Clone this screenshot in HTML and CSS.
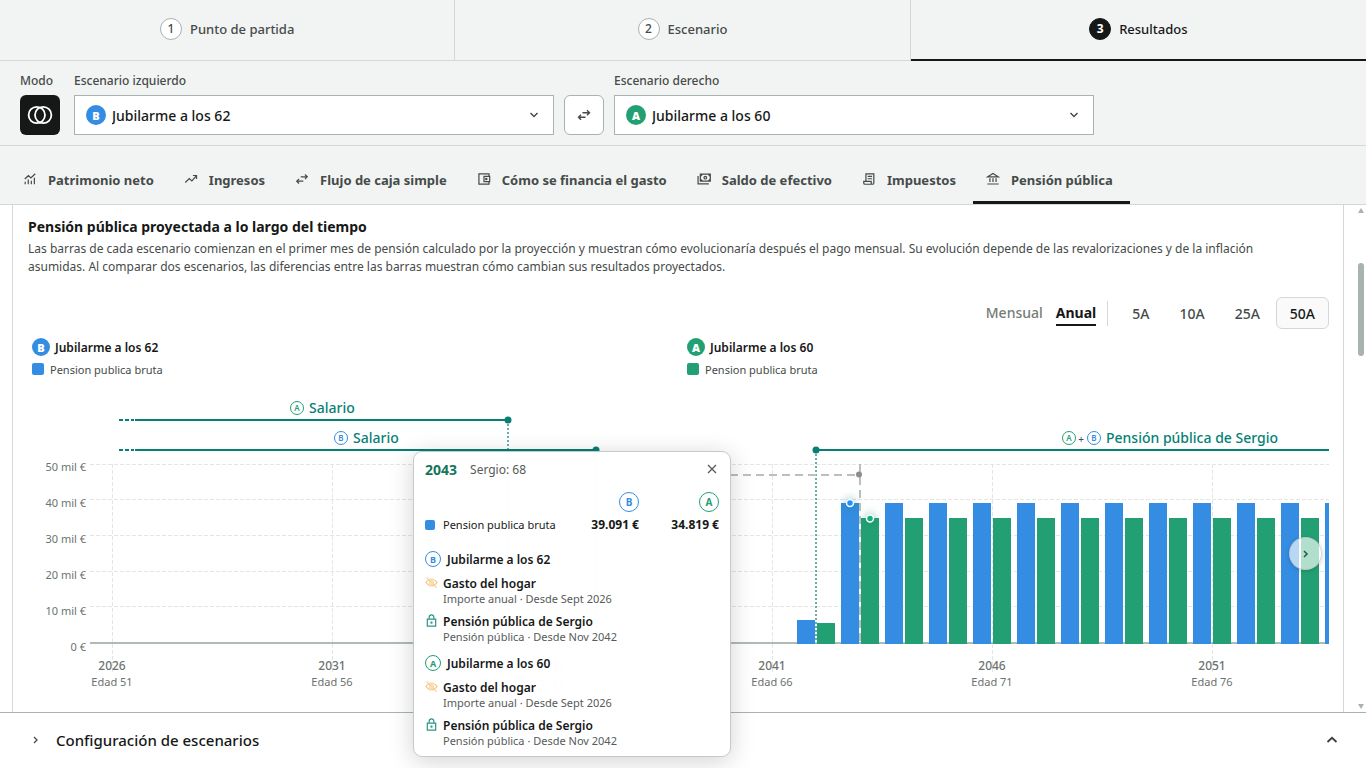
FILE: index.html
```html
<!DOCTYPE html>
<html lang="es">
<head>
<meta charset="utf-8">
<title>Resultados - Pensión pública</title>
<link rel="stylesheet" href="styles.css">
</head>
<body>
<nav class="steps" aria-label="Pasos">
  <button class="step"><span class="step-num">1</span>Punto de partida</button>
  <button class="step"><span class="step-num">2</span>Escenario</button>
  <button class="step step-active"><span class="step-num">3</span>Resultados</button>
</nav>

<section class="controls">
  <div class="field">
    <span class="label">Modo</span>
    <button class="mode" aria-label="Modo comparación"><svg width="26" height="20" viewBox="0 0 26 20" fill="none" stroke="#fff" stroke-width="1.8"><circle cx="9.800" cy="10" r="8.200"/><circle cx="16.200" cy="10" r="8.200"/></svg></button>
  </div>
  <div class="field field-wide">
    <label class="label" for="left">Escenario izquierdo</label>
    <div class="select-wrap">
      <select id="left"><option>Jubilarme a los 62</option></select>
      <span class="badge badge-b badge-over">B</span>
      <svg class="chevron" width="10" height="6" viewBox="0 0 10 6" fill="none" stroke="#454b49" stroke-width="1.5"><path d="M1.500 1 5 4.500 8.500 1"/></svg>
    </div>
  </div>
  <button class="swap" aria-label="Intercambiar"><svg width="14" height="12" viewBox="0 0 14 12" fill="none" stroke="#454b49" stroke-width="1.400"><path d="M5.500 3.800H12.500M10 1.300 12.500 3.800 10 6.300M8.500 8.200H1.500M4 5.700 1.500 8.200 4 10.700"/></svg></button>
  <div class="field field-wide">
    <label class="label" for="right">Escenario derecho</label>
    <div class="select-wrap">
      <select id="right"><option>Jubilarme a los 60</option></select>
      <span class="badge badge-a badge-over">A</span>
      <svg class="chevron" width="10" height="6" viewBox="0 0 10 6" fill="none" stroke="#454b49" stroke-width="1.5"><path d="M1.500 1 5 4.500 8.500 1"/></svg>
    </div>
  </div>
</section>

<nav class="tabs" aria-label="Gráficos">
  <button class="tab"><svg viewBox="0 0 16 16"><path d="M2.500 14V11M6 14V8.500M9.500 14V10M13 14V6.500M2 8 6.200 4.200 9 6.800 14 2"/></svg>Patrimonio neto</button>
  <button class="tab"><svg viewBox="0 0 16 16"><path d="M1.500 12 6 7.500 9 10.200 14 4.500M10.200 4H14.300V8"/></svg>Ingresos</button>
  <button class="tab"><svg viewBox="0 0 16 16"><path d="M6.500 5.500H14M11.400 2.900 14 5.500 11.400 8.100M9.500 10.500H2M4.600 7.900 2 10.500 4.600 13.100"/></svg>Flujo de caja simple</button>
  <button class="tab"><svg viewBox="0 0 16 16"><path d="M13.700 4.500V2.200H2.200V13.800H13.700V11.500M8 5H14.500V11H8Z"/><circle cx="10.600" cy="8" r=".7"/></svg>Cómo se financia el gasto</button>
  <button class="tab"><svg viewBox="0 0 16 16"><path d="M3.800 2.500H15.200V10.500H3.800ZM1.200 4.500V13.500H13.500M4 5 6 2.800M13 2.800 15 5M4 8.200 6 10.200M13 10.200 15 8.200"/><circle cx="9.500" cy="6.500" r="1.500"/></svg>Saldo de efectivo</button>
  <button class="tab"><svg viewBox="0 0 16 16"><path d="M4.500 10.500V2.200H13.500V12.500Q13.500 14 12 14H3.500Q2 14 2 12.500V10.800H10.500V12.500Q10.500 14 12 14M6.500 5H11.500M6.500 7.700H11.500"/></svg>Impuestos</button>
  <button class="tab tab-active"><svg viewBox="0 0 16 16"><path d="M2 5.500 8 1.800 14 5.500ZM4.500 7V11.500M8 7V11.500M11.500 7V11.500M1.500 13.700H14.500"/></svg>Pensión pública</button>
</nav>

<main class="content">
  <article class="card">
    <h2>Pensión pública proyectada a lo largo del tiempo</h2>
    <p class="intro">Las barras de cada escenario comienzan en el primer mes de pensión calculado por la proyección y muestran cómo evolucionaría después el pago mensual. Su evolución depende de las revalorizaciones y de la inflación asumidas. Al comparar dos escenarios, las diferencias entre las barras muestran cómo cambian sus resultados proyectados.</p>
    <div class="range">
      <button class="period">Mensual</button>
      <button class="period period-on">Anual</button>
      <span class="divider"></span>
      <button class="years">5A</button>
      <button class="years">10A</button>
      <button class="years">25A</button>
      <button class="years years-on">50A</button>
    </div>
    <div class="legend">
      <div class="legend-col">
        <div class="legend-name"><span class="badge badge-b badge-small">B</span>Jubilarme a los 62</div>
        <div class="legend-item"><span class="swatch swatch-b"></span>Pension publica bruta</div>
      </div>
      <div class="legend-col">
        <div class="legend-name"><span class="badge badge-a badge-small">A</span>Jubilarme a los 60</div>
        <div class="legend-item"><span class="swatch swatch-a"></span>Pension publica bruta</div>
      </div>
    </div>
    <div class="chart-wrap">
      <svg class="chart" id="chart" role="img" aria-label="Pensión pública por año"></svg>
      <button class="next" aria-label="Siguiente"><svg width="8" height="10" viewBox="0 0 8 10" fill="none" stroke="#2c5a4a" stroke-width="1.600"><path d="M2 2 5 5 2 8"/></svg></button>
    </div>
  </article>
  <div class="scroll" aria-hidden="true">
    <span class="arrow-up"></span>
    <span class="thumb"></span>
    <span class="arrow-down"></span>
  </div>
</main>

<footer class="config">
  <button class="config-btn">
    <svg width="8" height="10" viewBox="0 0 8 10" fill="none" stroke="#454b49" stroke-width="1.300"><path d="M2 2 5 5 2 8"/></svg>
    <span>Configuración de escenarios</span>
    <svg class="config-up" width="12" height="8" viewBox="0 0 12 8" fill="none" stroke="#3a3f3d" stroke-width="1.800"><path d="M1.500 6 6 1.800 10.500 6"/></svg>
  </button>
</footer>

<aside class="tip">
  <header class="tip-head"><strong>2043</strong><span>Sergio: 68</span>
    <button class="close" aria-label="Cerrar"><svg width="10" height="10" viewBox="0 0 10 10" stroke="#555b59" stroke-width="1.300"><path d="M1 1 9 9M9 1 1 9"/></svg></button>
  </header>
  <table class="tip-table">
    <tr><td></td><th><span class="ring ring-b ring-big">B</span></th><th><span class="ring ring-a ring-big">A</span></th></tr>
    <tr><td><div class="series"><span class="dot"></span>Pension publica bruta</div></td><td class="num">39.091 €</td><td class="num">34.819 €</td></tr>
  </table>
  <div class="tip-name"><span class="ring ring-b">B</span>Jubilarme a los 62</div>
  <div class="event"><svg class="eye" viewBox="0 0 14 14"><path d="M1 7Q7-.5 13 7 7 14.500 1 7ZM1.500 1.500 12.500 12.500"/><circle cx="7" cy="7" r="2"/></svg><div><b>Gasto del hogar</b><span>Importe anual · Desde Sept 2026</span></div></div>
  <div class="event"><svg class="lock" viewBox="0 0 14 14"><path d="M2.500 5.500H11.500V13H2.500ZM4.500 5.500V3.500A2.500 2.500 0 0 1 9.500 3.500V5.500"/><circle cx="7" cy="9.300" r=".6"/></svg><div><b>Pensión pública de Sergio</b><span>Pensión pública · Desde Nov 2042</span></div></div>
  <div class="tip-name"><span class="ring ring-a">A</span>Jubilarme a los 60</div>
  <div class="event"><svg class="eye" viewBox="0 0 14 14"><path d="M1 7Q7-.5 13 7 7 14.500 1 7ZM1.500 1.500 12.500 12.500"/><circle cx="7" cy="7" r="2"/></svg><div><b>Gasto del hogar</b><span>Importe anual · Desde Sept 2026</span></div></div>
  <div class="event"><svg class="lock" viewBox="0 0 14 14"><path d="M2.500 5.500H11.500V13H2.500ZM4.500 5.500V3.500A2.500 2.500 0 0 1 9.500 3.500V5.500"/><circle cx="7" cy="9.300" r=".6"/></svg><div><b>Pensión pública de Sergio</b><span>Pensión pública · Desde Nov 2042</span></div></div>
</aside>
<script src="chart.js"></script>
</body>
</html>
```
FILE: styles.css
```css
* { box-sizing: border-box; }
body {
  margin: 0;
  height: 100vh;
  display: flex;
  flex-direction: column;
  overflow: hidden;
  font-family: "Noto Sans", sans-serif;
  font-size: 13px;
  color: #161817;
  background: #fff;
}
button { font: inherit; color: inherit; background: none; border: 0; padding: 0; }

.steps { display: grid; grid-template-columns: repeat(3, 1fr); background: #f2f4f3; flex: none; }
.step {
  height: 61px; padding-bottom: 3px; display: flex; align-items: center; justify-content: center; gap: 8px;
  font-weight: 500; color: #454b49;
  border-bottom: 1px solid #d3d8d6; border-right: 1px solid #d3d8d6;
}
.step-num {
  width: 22px; height: 22px; border-radius: 50%; border: 1px solid #a8b3af; background: #fff;
  display: flex; align-items: center; justify-content: center; font-size: 12px;
}
.step-active { color: #161817; border-right: 0; border-bottom: 2px solid #161817; padding-bottom: 2px; }
.step-active .step-num { background: #161817; border-color: #161817; color: #fff; font-weight: 700; }

.controls {
  flex: none; display: flex; align-items: flex-end; gap: 10px; padding: 10px 20px;
  background: #f2f4f3; border-bottom: 1px solid #d3d8d6;
}
.field { display: flex; flex-direction: column; gap: 5px; }
.field:first-child { margin-right: 4px; }
.field-wide { flex: 0 1 480px; }
.label { font-size: 12px; line-height: 19px; font-weight: 500; color: #454b49; white-space: nowrap; }
.mode, .swap {
  width: 40px; height: 40px; border-radius: 6px; flex: none;
  display: flex; align-items: center; justify-content: center;
}
.mode { background: #161817; }
.swap { background: #fff; border: 1px solid #a8b3af; }
.select-wrap { position: relative; }
.select-wrap select {
  appearance: none; width: 100%; height: 40px; padding: 0 36px 0 37px; border: 1px solid #a8b3af; border-radius: 0;
  background: #fff; font: 500 14px "Noto Sans", sans-serif; color: #161817;
}
.badge {
  width: 20px; height: 20px; border-radius: 50%; color: #fff; font-size: 11px; font-weight: 900;
  display: flex; align-items: center; justify-content: center; flex: none;
}
.badge-small { width: 18px; height: 18px; }
.badge-b { background: #348de2; }
.badge-a { background: #23a073; }
.badge-over { position: absolute; left: 12px; top: 10px; }
.chevron { position: absolute; right: 15px; top: 17px; }

.tabs { flex: none; display: flex; padding-left: 10px; background: #f2f4f3; border-bottom: 1px solid #d3d8d6; }
.tab {
  height: 58px; padding: 12px 17px 0 13px; display: flex; align-items: center; gap: 11px;
  font-size: 13px; font-weight: 700; color: #454b49; white-space: nowrap; border-bottom: 3px solid transparent;
}
.tab svg { width: 14px; height: 14px; margin-bottom: 2px; fill: none; stroke: #454b49; stroke-width: 1.400; }
.tab-active { border-bottom-color: #161817; }

.content { flex: 1; min-height: 0; display: flex; overflow: hidden; padding-left: 12px; }
.card { flex: 1; min-width: 0; border: solid #d3d8d6; border-width: 0 1px; padding: 12px 14px 0 15px; }
h2 { margin: 0; font-size: 14px; line-height: 20px; font-weight: 700; }
.intro { margin: 3px 0 0; padding-right: 48px; font-size: 12px; line-height: 18px; color: #454b49; }
.range { margin-top: 20px; display: flex; justify-content: flex-end; align-items: center; height: 34px; font-size: 14px; font-weight: 500; color: #454b49; }
.period { color: #747b78; margin-right: 13px; padding-top: 2px; border-bottom: 2px solid transparent; line-height: 22px; }
.period-on { color: #161817; font-weight: 700; border-color: #161817; margin-right: 11px; }
.divider { width: 1px; height: 25px; background: #d3d8d6; margin-right: 8px; }
.years { height: 32px; padding: 0 13px; margin-left: 2px; border: 1px solid transparent; border-radius: 6px; }
.years-on { color: #161817; border-color: #d3d8d6; background: #f9faf9; }
.legend { display: grid; grid-template-columns: 1fr 1fr; column-gap: 13px; padding: 8px 0 0 4px; }
.legend-name { display: flex; align-items: center; gap: 5px; height: 18px; font-size: 12px; font-weight: 600; }
.legend-item { display: flex; align-items: center; gap: 6px; height: 18px; margin-top: 4px; font-size: 11px; color: #454b49; }
.swatch { width: 12px; height: 12px; border-radius: 2px; }
.swatch-b { background: #348de2; }
.swatch-a { background: #23a073; }

.chart-wrap { position: relative; margin-top: 18px; }
.chart { display: block; width: 100%; height: 316px; }
.chart text { font-family: "Noto Sans", sans-serif; }
.grid { stroke: #e4e6e5; stroke-dasharray: 4 2; }
.axis { stroke: #b0bab6; stroke-width: 2; }
.span { stroke: #067f75; stroke-width: 2; }
.fade { stroke-dasharray: 4 2; }
.drop { stroke: #067f75; stroke-width: 2; stroke-dasharray: 2 2; opacity: .6; }
.cursor { stroke: #bdbfbe; stroke-width: 2; stroke-dasharray: 8 5; }
.tick { font-size: 11px; fill: #6c7370; }
.year { font-size: 12px; fill: #6c7370; font-weight: 500; }
.span-label { font-size: 14px; font-weight: 500; fill: #067f75; }
.mini { font-size: 8px; font-weight: 600; }
.plus { font-size: 10px; fill: #454b49; }
.marker { stroke: #fff; stroke-width: 1.500; filter: drop-shadow(0 0 4px #067f7599); }
.next {
  position: absolute; right: 7px; top: 141px; width: 33px; height: 33px; border-radius: 50%;
  background: #ffffffa6; border: 1px solid #b8c0bd99; box-shadow: 0 1px 4px #0003;
  display: flex; align-items: center; justify-content: center;
}

.scroll { width: 22px; flex: none; display: flex; flex-direction: column; align-items: flex-end; padding: 3px 2px 3px 0; }
.arrow-up, .arrow-down { border: solid transparent; border-width: 0 3px; }
.arrow-up { border-bottom: 5px solid #a8b3af; }
.arrow-down { border-top: 5px solid #a8b3af; margin-top: auto; }
.thumb { width: 6px; height: 93px; margin-top: 50px; border-radius: 3px; background: #a8b3af; }

.config { flex: none; border-top: 1px solid #a8b3af; }
.config-btn { width: 100%; height: 55px; display: flex; align-items: center; padding: 0 28px 2px 32px; font-size: 15px; font-weight: 500; }
.config-btn span { margin-left: 16px; }
.config-up { margin-left: auto; }

.tip {
  position: absolute; left: 413px; top: 451px; width: 318px; padding: 6px 11px 7px;
  background: #fffffffa; border: 1px solid #c3cac7; border-radius: 9px; box-shadow: 0 4px 24px #0000002e;
  font-size: 12px;
}
.tip-head { display: flex; align-items: center; height: 22px; gap: 13px; color: #555b59; }
.tip-head strong { font-size: 14px; color: #14765c; }
.close { margin-left: auto; width: 14px; height: 14px; display: flex; align-items: center; justify-content: center; }
.tip-table { width: 100%; border-collapse: collapse; margin-top: 10px; }
.tip-table td, .tip-table th { padding: 0; height: 23px; line-height: 16px; vertical-align: middle; font-size: 11px; }
.tip-table .num { text-align: right; font-weight: 700; font-size: 12px; width: 80px; }
.series { display: flex; align-items: center; gap: 8px; }
.dot { width: 10px; height: 10px; border-radius: 2px; background: #348de2; }
.ring {
  width: 16px; height: 16px; border-radius: 50%; border: 1px solid; font-size: 9px; font-weight: 700;
  display: flex; align-items: center; justify-content: center; flex: none;
}
.ring-big { width: 20px; height: 20px; margin-left: auto; font-size: 10px; }
.ring-b { color: #348de2; }
.ring-a { color: #23a073; }
.tip-name { display: flex; align-items: center; gap: 6px; height: 18px; margin-top: 14px; font-size: 12px; font-weight: 600; }
.event { display: flex; gap: 5px; margin-top: 7px; }
.tip-name + .event { margin-top: 8px; }
.event + .tip-name { margin-top: 9px; }
.event svg { width: 13px; height: 13px; fill: none; stroke-width: 1.300; flex: none; }
.eye { stroke: #f6d193; }
.lock { stroke: #2b9687; }
.event b, .event span { display: block; line-height: 16px; }
.event b { font-size: 12px; font-weight: 600; line-height: 15px; }
.event span { font-size: 11px; color: #555b59; }
```
FILE: chart.js
```javascript
const svg = document.getElementById('chart');
const NS = 'http://www.w3.org/2000/svg';
const BLUE = '#348de2';
const GREEN = '#23a073';
const BASE = 248;

function add(tag, attrs, text) {
  const el = document.createElementNS(NS, tag);
  for (const key in attrs) el.setAttribute(key, attrs[key]);
  if (text) el.textContent = text;
  svg.appendChild(el);
}
function line(cls, x1, y1, x2, y2) {
  add('line', { class: cls, x1, y1, x2, y2 });
}
const yearX = (year) => 84 + (year - 2026) * 44;

// Horizontal grid and amounts
[[50, 68.5], [40, 103.5], [30, 139.5], [20, 175.5], [10, 210.5]].forEach(([value, y], i) => {
  line('grid', 62, y, '100%', y);
  add('text', { class: 'tick', x: 58, y: 75 + i * 36, 'text-anchor': 'end' }, value + ' mil €');
});
add('text', { class: 'tick', x: 58, y: 255, 'text-anchor': 'end' }, '0 €');

// Five-year marks
for (let year = 2026; year <= 2051; year += 5) line('grid', yearX(year) + 0.5, 68, yearX(year) + 0.5, 278);
line('axis', 62, 247, '100%', 247);

// Annual bars for both scenarios
for (let year = 2042; year <= 2054; year++) {
  const x = 769 + (year - 2042) * 44;
  const b = year === 2042 ? 24 : 141;
  const a = year === 2042 ? 21 : 126;
  add('rect', { x, y: BASE - b, width: 18, height: b, fill: BLUE });
  add('rect', { x: x + 20, y: BASE - a, width: 18, height: a, fill: GREEN });
}
for (let year = 2026; year <= 2051; year += 5) {
  add('text', { class: 'year', x: yearX(year), y: 274, 'text-anchor': 'middle' }, String(year));
  add('text', { class: 'tick', x: yearX(year), y: 290, 'text-anchor': 'middle' }, 'Edad ' + (year - 1975));
}

// Income periods
function mini(x, y, letter) {
  const color = letter === 'A' ? GREEN : BLUE;
  add('circle', { cx: x, cy: y, r: 6.5, fill: '#fff', stroke: color });
  add('text', { class: 'mini', x, y: y + 3, fill: color, 'text-anchor': 'middle' }, letter);
}
line('span fade', 91, 24, 106, 24);
line('span', 107, 24, 480, 24);
line('drop', 480, 28, 480, 246);
add('circle', { cx: 480, cy: 24, r: 3.5, fill: '#067f75' });
mini(269, 12, 'A');
add('text', { class: 'span-label', x: 281, y: 17 }, 'Salario');

line('span fade', 91, 54, 106, 54);
line('span', 107, 54, 568, 54);
line('drop', 568, 58, 568, 246);
add('circle', { cx: 568, cy: 54, r: 3.5, fill: '#067f75' });
mini(313, 42, 'B');
add('text', { class: 'span-label', x: 325, y: 47 }, 'Salario');

line('span', 788, 54, '100%', 54);
line('drop', 788, 58, 788, 246);
add('circle', { cx: 788, cy: 54, r: 3.5, fill: '#067f75' });
mini(1041, 42, 'A');
add('text', { class: 'plus', x: 1053, y: 47, 'text-anchor': 'middle' }, '+');
mini(1066, 42, 'B');
add('text', { class: 'span-label', x: 1078, y: 47 }, 'Pensión pública de Sergio');

// Selected year
line('cursor', 650, 79, 831, 79);
line('cursor', 832, 68, 832, 246);
add('circle', { cx: 831, cy: 78.5, r: 3, fill: '#8b8e8d' });
add('circle', { class: 'marker', cx: 822, cy: 107, r: 3.5, fill: '#1e90ff' });
add('circle', { class: 'marker', cx: 842, cy: 122.5, r: 3.5, fill: '#12b07a' });
```
